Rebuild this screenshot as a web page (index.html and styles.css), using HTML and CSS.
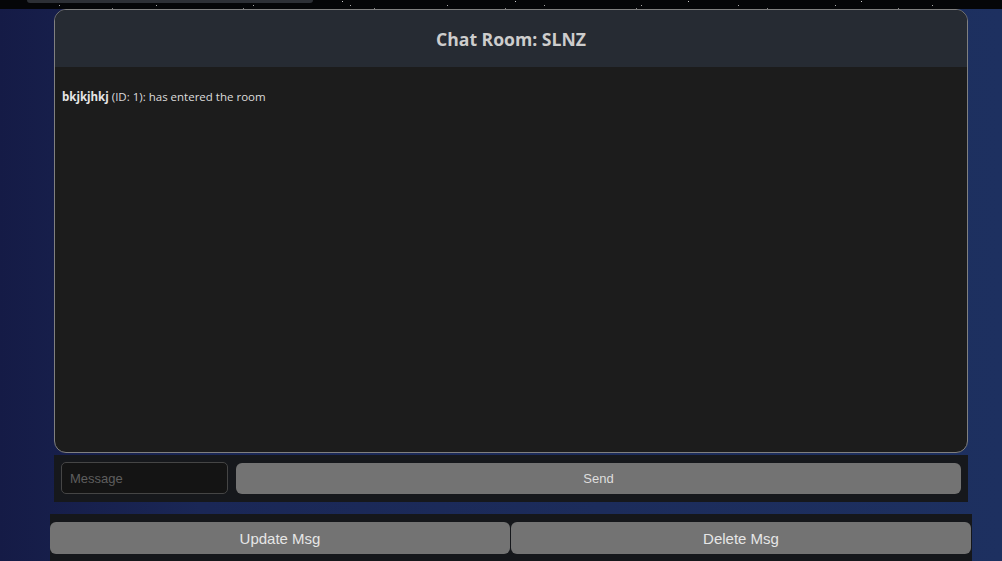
FILE: index.html
```html
<!DOCTYPE html>
<html lang="en">
<head>
<meta charset="utf-8">
<title>Chat Room: SLNZ</title>
<link rel="stylesheet" href="styles.css">
</head>
<body>
<div class="topstrip"><div class="topbar"></div></div>
<main class="page">
  <section class="card">
    <header class="card-header"><h1 class="title">Chat Room: SLNZ</h1></header>
    <div class="messages">
      <p class="msg"><strong>bkjkjhkj</strong> (ID: 1): has entered the room</p>
    </div>
  </section>
  <form class="input-row">
    <input class="msg-input" type="text" placeholder="Message">
    <button class="send-btn" type="button">Send</button>
  </form>
  <div class="actions">
    <button class="act-btn" type="button">Update Msg</button>
    <button class="act-btn" type="button">Delete Msg</button>
  </div>
</main>
</body>
</html>
```
FILE: styles.css
```css
html, body {
  margin: 0;
  padding: 0;
  height: 100%;
  overflow: hidden;
}
body {
  background: linear-gradient(to right, #151b46 0%, #1a2756 20%, #1c2c5b 60%, #1d3060 100%);
  font-family: "Open Sans", "Liberation Sans", sans-serif;
}
.topstrip {
  height: 9px;
  background-color: #050608;
  background-image:
    radial-gradient(circle, #aaa 0.7px, transparent 1px),
    radial-gradient(circle, #888 0.6px, transparent 1px),
    radial-gradient(circle, #ccc 0.7px, transparent 1px);
  background-size: 97px 9px, 131px 9px, 173px 9px;
  background-position: 11px 1px, 47px 4px, 83px 6px;
  position: relative;
}
.topbar {
  position: absolute;
  left: 27px;
  top: 0;
  width: 286px;
  height: 3px;
  background: #2c2f35;
  border-radius: 0 0 5px 5px;
}
.page {
  padding-left: 50px;
  width: 922px;
}
.card {
  margin-left: 4px;
  width: 912px;
  height: 442px;
  border: 1px solid #808080;
  border-radius: 12px;
  overflow: hidden;
  display: flex;
  flex-direction: column;
  background: #1c1c1c;
}
.card-header {
  height: 57px;
  background: #262b33;
  display: flex;
  align-items: center;
  justify-content: center;
  flex: none;
}
.title {
  margin: 0;
  font-size: 17.6px;
  font-weight: 700;
  color: #cdcdcd;
}
.messages {
  flex: 1;
  padding: 22px 7px;
}
.msg {
  margin: 0;
  font-size: 11.5px;
  line-height: 16px;
  color: #dcdcdc;
}
.msg strong {
  color: #e6e6e6;
}
.input-row {
  margin: 2px 0 0 4px;
  width: 900px;
  height: 33px;
  padding: 7px;
  background: #16181c;
  display: flex;
  gap: 8px;
  align-items: flex-start;
}
.msg-input {
  box-sizing: border-box;
  width: 167px;
  height: 32px;
  background: #141414;
  border: 1px solid #454545;
  border-radius: 5px;
  padding: 0 8px;
  font-family: "Liberation Sans", Arial, sans-serif;
  font-size: 13px;
  color: #ccc;
}
.msg-input::placeholder {
  color: #5e5e5e;
}
.send-btn {
  flex: 1;
  height: 31px;
  margin-top: 1px;
  background: #737373;
  border: none;
  border-radius: 6px;
  color: #dedede;
  font-family: "Liberation Sans", Arial, sans-serif;
  font-size: 13px;
}
.actions {
  margin-top: 12px;
  height: 47px;
  padding-top: 8px;
  box-sizing: border-box;
  background: #15171b;
  display: flex;
  align-items: flex-start;
  gap: 1px;
}
.act-btn {
  width: 460px;
  height: 32px;
  background: #737373;
  border: none;
  border-radius: 6px;
  color: #e6e6e6;
  font-family: "Liberation Sans", Arial, sans-serif;
  font-size: 15px;
}
```
